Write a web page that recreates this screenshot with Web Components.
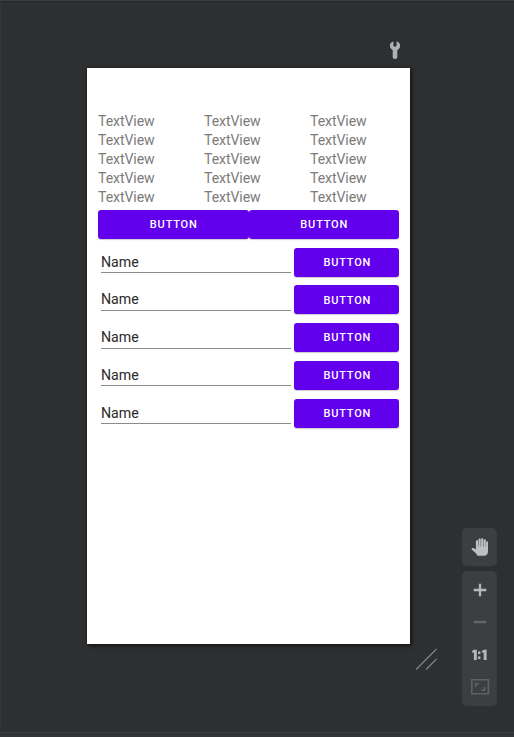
<!DOCTYPE html>
<html lang="en"><head><meta charset="utf-8"><title>Layout editor</title>
<style>html,body{margin:0;height:100%;background:#2e2f31;overflow:hidden}</style></head>
<body><design-surface></design-surface>
<script>
const define=(name,html)=>customElements.define(name,class extends HTMLElement{
  constructor(){super();this.attachShadow({mode:'open'}).innerHTML=html;}
});
define('text-view',`<style>:host{display:block;height:18.9px;line-height:18.9px;font-size:14.1px;letter-spacing:-.09px;color:#7b7b7b;white-space:nowrap}</style><slot></slot>`);
define('material-button',`<style>:host{display:flex;align-items:center;justify-content:center;height:28.6px;box-sizing:border-box;border-radius:3px;background:#6200ee;color:#fff;font-size:11px;font-weight:500;letter-spacing:.82px;padding:.4px 0 0 1px;box-shadow:0 1px 1px rgba(0,0,0,.2)}</style><span><slot></slot></span>`);
define('edit-text',`<style>:host{display:block;height:25.3px;line-height:28.4px;box-sizing:border-box;border-bottom:1px solid #8b8b8b;font-size:14.2px;color:#2b2b2b}</style><slot></slot>`);
define('form-row',`<style>:host{display:grid;grid-template-columns:190px 105px;column-gap:3.3px;padding-left:3px;height:37.8px;align-items:start}material-button{height:29px}</style>
<edit-text><slot></slot></edit-text><material-button>BUTTON</material-button>`);
define('phone-screen',`<style>
:host{display:block;width:323px;height:576px;box-sizing:border-box;padding:44.4px 11px 0;background:#fff;box-shadow:2px 2px 4px rgba(0,0,0,.5),0 0 3px rgba(0,0,0,.3);font-family:Roboto,sans-serif}
.texts{display:grid;grid-template-columns:106px 106px 1fr;height:97.6px;align-content:start}
.buttons{display:grid;grid-template-columns:1fr 1fr;height:37.7px;align-items:start}
</style><div class="texts">${'<text-view>TextView</text-view>'.repeat(15)}</div>
<div class="buttons"><material-button>BUTTON</material-button><material-button>BUTTON</material-button></div>
${'<form-row>Name</form-row>'.repeat(5)}`);
define('tool-panel',`<style>:host{display:flex;flex-direction:column;align-items:center;width:35px;box-sizing:border-box;border-radius:5px;background:#3c3f41}</style><slot></slot>`);
define('zoom-tools',`<style>
:host{display:flex;flex-direction:column;gap:5px}svg{display:block}
.pan{height:38px}.zoom{height:135px}
</style>
<tool-panel class="pan"><svg width="35" height="38"><path fill="#bfbfbf" d="M15.5 27.8c-1.2-2.4-3.2-4-5.6-6-.9-.9.1-2.3 1.6-1.7l2.4 1.3v-8.1c0-1.4 2.2-1.4 2.2 0v5.3h.4v-7c0-1.4 2.2-1.4 2.2 0v6.8h.4v-7.2c0-1.4 2.2-1.4 2.2 0v7.2h.4v-6.2c0-1.4 2.1-1.4 2.1 0v6.6h.3v-4.4c0-1.4 1.9-1.4 1.9 0v9.1c0 2.3-1.5 4.3-3.7 4.3z"/></svg></tool-panel>
<tool-panel class="zoom"><svg width="35" height="135" fill="none">
<path stroke="#b5b7b9" stroke-width="2.3" d="M11.7 19h12.6M18 12.7v12.6"/>
<path stroke="#646667" stroke-width="2.4" d="M11.8 51h12.4"/>
<path fill="#b5b7b9" d="M10 80.3 11.8 78.7h3V89h-2.9v-7.6H10zM19.8 80.3l1.8-1.6h3V89h-2.9v-7.6h-1.9zM16 80.5h2.4V83H16zM16 85.6h2.4V88H16z"/>
<path stroke="#606162" stroke-width="1.6" d="M9.8 108.8h16.6v14H9.8z"/>
<path stroke="#606162" stroke-width="1.6" d="M13.7 116v-3.2H17M22.6 115.8v3.3h-3.4"/>
</svg></tool-panel>`);
define('design-surface',`<style>
:host{display:grid;grid-template-columns:87px 323px 52px 35px;grid-template-rows:67px 576px 1fr;width:514px;height:737px;box-sizing:border-box;border-top:1px solid #3c3f41;box-shadow:inset 0 1px #27282a,inset 1px 0 #343537;border-bottom:0;background:linear-gradient(#393b3d,#393b3d) 0 731px/100% 1px no-repeat,linear-gradient(#313335,#313335) 0 732px/100% 4px no-repeat,#2e2f31}
svg{display:block}.wrench{grid-area:1/2;justify-self:end;align-self:end;margin:0 8px 8px 0}
phone-screen{grid-area:2/2}zoom-tools{grid-area:2/4/4/5;padding-top:460px}
.resize{grid-area:2/3/4/4;margin:580px 0 0 5px}
</style>
<svg class="wrench" width="14" height="20"><path fill="#afb1b3" d="M5.4 1.4v4.4L7 6.9l1.6-1.1V1.4C10.8 1.9 12.1 3.6 12.1 5.7c0 2-1.1 3.5-2.8 4.2v7.2c0 1.2-.9 1.9-2.3 1.9s-2.3-.7-2.3-1.9V9.9C3 9.2 1.9 7.7 1.9 5.7c0-2.1 1.3-3.8 3.5-4.3z"/></svg>
<phone-screen></phone-screen>
<svg class="resize" width="24" height="24" stroke="#858687" stroke-width="1.1" fill="none"><path d="M1 21.5 21.5 1M11 21.5l10.5-10.5"/></svg>
<zoom-tools></zoom-tools>`);
</script></body></html>
